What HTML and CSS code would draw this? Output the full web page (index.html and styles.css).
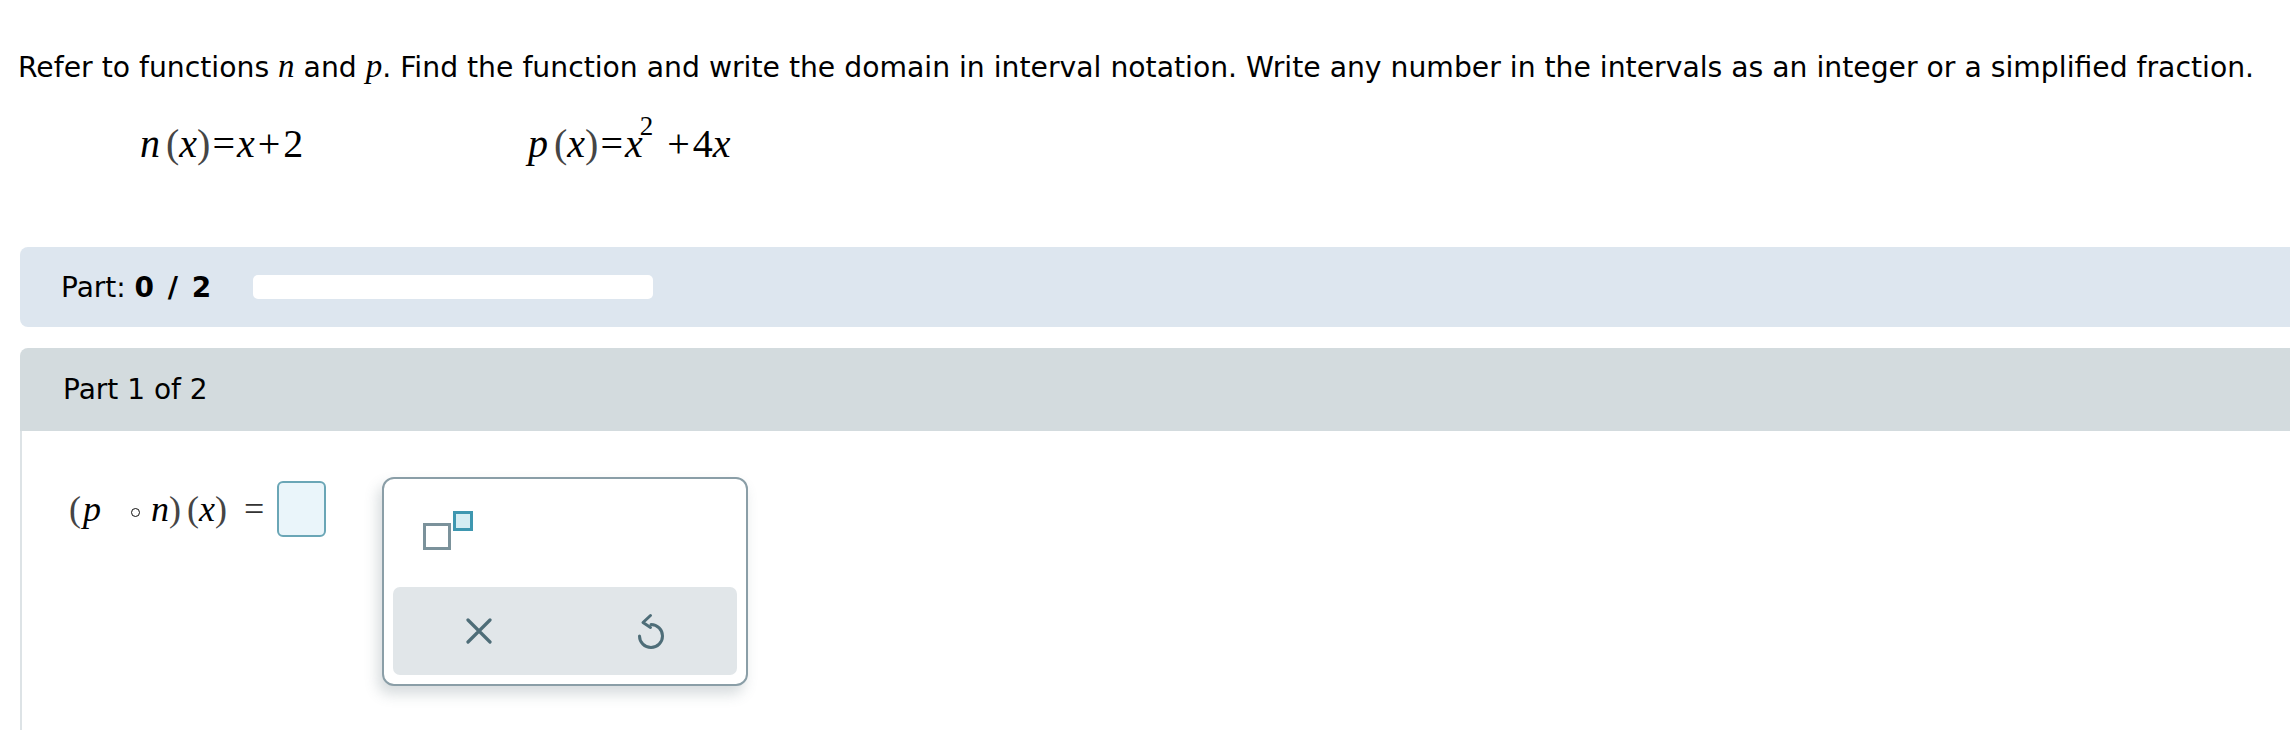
FILE: index.html
```html
<!DOCTYPE html>
<html lang="en">
<head>
<meta charset="utf-8">
<title>Composition of functions</title>
<link rel="stylesheet" href="styles.css">
</head>
<body>
<main class="page">
  <p class="prompt">Refer to functions <i class="mv">n</i> and <i class="mv">p</i>. Find the function and write the domain in interval notation. Write any number in the intervals as an integer or a simplified fraction.</p>

  <div class="defs">
    <span class="math def def-n"><i>n</i><span class="pr sp-l">(</span><i>x</i><span class="pr">)</span><span class="op">=</span><i>x</i><span class="op op-plus">+</span>2</span>
    <span class="math def def-p"><i>p</i><span class="pr sp-l">(</span><i>x</i><span class="pr">)</span><span class="op">=</span><i>x</i><sup class="exp">2</sup><span class="op op-wide">+</span>4<i>x</i></span>
  </div>

  <div class="progress">
    <span class="plabel">Part: <b>0 / 2</b></span>
    <div class="track"></div>
  </div>

  <section class="part">
    <div class="part-head">Part 1 of 2</div>
    <div class="part-body">
      <div class="answer">
        <span class="math comp"><span class="pr">(</span><i class="cp">p</i><span class="circ"></span><i>n</i><span class="pr pr-gap">)</span><span class="pr">(</span><i>x</i><span class="pr">)</span></span>
        <span class="eq">=</span>
        <span class="input"></span>
      </div>

      <div class="palette">
        <div class="tpl-row">
          <button class="tpl" type="button" aria-label="superscript">
            <span class="tpl-base"></span><span class="tpl-sup"></span>
          </button>
        </div>
        <div class="actions">
          <button class="act" type="button" aria-label="clear">
            <svg width="26" height="26" viewBox="0 0 26 26"><path d="M2 2 L24 24 M24 2 L2 24" fill="none" stroke="#4e6d78" stroke-width="3.2" stroke-linecap="round"/></svg>
          </button>
          <button class="act" type="button" aria-label="undo">
            <svg width="30" height="36" viewBox="0 0 30 36"><path d="M3.5 23 A11.5 11.5 0 1 0 15 11.5" fill="none" stroke="#4e6d78" stroke-width="3" stroke-linecap="round"/><path d="M14.5 2.5 L7 9.5 L14.5 14.5" fill="none" stroke="#4e6d78" stroke-width="3" stroke-linecap="round" stroke-linejoin="round"/></svg>
          </button>
        </div>
      </div>
    </div>
  </section>
</main>
</body>
</html>
```

FILE: styles.css
```css
html, body {
  margin: 0;
  padding: 0;
  background: #ffffff;
  overflow: hidden;
}

body {
  font-family: "DejaVu Sans", Verdana, sans-serif;
  color: #000;
}

.page {
  padding: 44px 0 0 20px;
}

.prompt {
  margin: 0 0 0 -2px;
  font-size: 28.25px;
  line-height: 44px;
  white-space: nowrap;
}

.mv {
  font-family: "Liberation Serif", "Times New Roman", serif;
  font-size: 33px;
}

.math {
  font-family: "Liberation Serif", "Times New Roman", serif;
  font-size: 40px;
  white-space: nowrap;
}

.math i {
  font-style: italic;
}

.pr {
  color: #454545;
}

.sp-l {
  margin-left: 6px;
}

.op {
  margin: 0 2px;
}

.op-plus {
  margin: 0 3px;
}

.op-wide {
  margin-left: 14px;
  margin-right: 3px;
}

.exp {
  font-size: 27px;
  vertical-align: 0;
  position: relative;
  top: -22px;
  margin-left: -3px;
}

.defs {
  display: flex;
  align-items: baseline;
  padding-left: 120px;
  margin-top: 30px;
  height: 60px;
}

.def-n {
  width: 388px;
}

.progress {
  display: flex;
  align-items: center;
  margin-top: 67px;
  margin-right: -20px;
  height: 80px;
  background: #dde6ef;
  border-radius: 8px 0 0 8px;
  padding-left: 41px;
}

.plabel {
  font-size: 28px;
  white-space: nowrap;
}

.plabel b {
  font-weight: bold;
  word-spacing: 4px;
}

.track {
  width: 400px;
  height: 24px;
  background: #ffffff;
  border-radius: 5px;
  margin-left: 42px;
}

.part {
  margin-top: 21px;
  margin-right: -20px;
}

.part-head {
  height: 83px;
  display: flex;
  align-items: center;
  padding-left: 43px;
  background: #d3dbde;
  border-radius: 8px 0 0 0;
  font-size: 28px;
}

.part-body {
  border-left: 2px solid #dde3e6;
  display: flex;
  align-items: flex-start;
  padding: 46px 0 46px 47px;
}

.answer {
  display: flex;
  align-items: center;
  margin-top: 4px;
}

.comp {
  font-size: 36px;
  display: inline-flex;
  align-items: baseline;
}

.comp .cp {
  margin-left: 2px;
}

.comp .circ {
  display: inline-block;
  width: 7px;
  height: 7px;
  border: 1.6px solid #111;
  border-radius: 50%;
  margin: 0 11px 0 30px;
  position: relative;
  top: -4px;
}

.comp .pr-gap {
  margin-right: 6px;
}

.eq {
  font-family: "Liberation Serif", serif;
  font-size: 36px;
  color: #333;
  margin: 0 13px 0 17px;
}

.input {
  width: 45px;
  height: 52px;
  border: 2px solid #6aa6b6;
  border-radius: 6px;
  background: #eaf5fa;
}

.palette {
  margin-left: 56px;
  width: 344px;
  padding: 9px;
  border: 2px solid #8a9ea7;
  border-radius: 12px;
  background: #fff;
  box-shadow: -4px 8px 14px rgba(70, 90, 100, 0.22);
}

.tpl-row {
  height: 99px;
}

.tpl {
  position: relative;
  width: 60px;
  height: 50px;
  margin: 23px 0 0 30px;
  padding: 0;
  border: 0;
  background: transparent;
}

.tpl-base {
  position: absolute;
  left: 0;
  top: 12px;
  width: 22px;
  height: 21px;
  border: 3px solid #7b929b;
  background: #fff;
}

.tpl-sup {
  position: absolute;
  left: 30px;
  top: 0;
  width: 14px;
  height: 14px;
  border: 3px solid #3e97b0;
  background: #d5edf3;
}

.actions {
  display: grid;
  grid-template-columns: 1fr 1fr;
  height: 88px;
  background: #e1e6e9;
  border-radius: 7px;
}

.act {
  display: flex;
  align-items: center;
  justify-content: center;
  border: 0;
  background: transparent;
  padding: 0;
}
```
